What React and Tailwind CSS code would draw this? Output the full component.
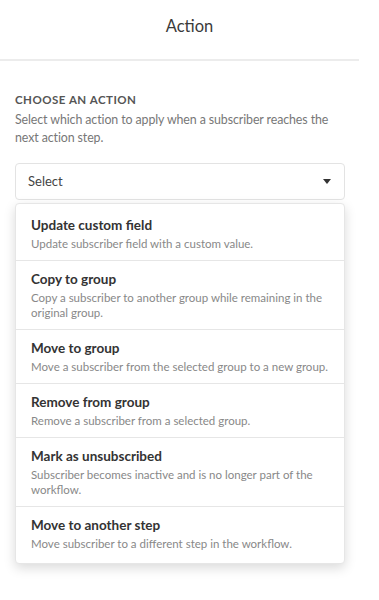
const ACTIONS = [
  {
    title: 'Update custom field',
    description: 'Update subscriber field with a custom value.',
  },
  {
    title: 'Copy to group',
    description: 'Copy a subscriber to another group while remaining in the original group.',
  },
  {
    title: 'Move to group',
    description: 'Move a subscriber from the selected group to a new group.',
  },
  {
    title: 'Remove from group',
    description: 'Remove a subscriber from a selected group.',
  },
  {
    title: 'Mark as unsubscribed',
    description: 'Subscriber becomes inactive and is no longer part of the workflow.',
  },
  {
    title: 'Move to another step',
    description: 'Move subscriber to a different step in the workflow.',
  },
];

const App = () => {
  return (
    <div className="w-[379px] h-[600px] bg-white font-['Lato',sans-serif] overflow-hidden">
      {/* Header */}
      <div className="h-[61px] flex items-center justify-center border-b-2 border-[#ececec] mr-[20px]">
        <h1 className="text-[16.5px] text-[#3a3a3a] -mt-[7px] ml-[20px]">Action</h1>
      </div>

      {/* Body */}
      <div className="w-[359px] px-[15px] pt-[31px]">
        <h2 className="text-[11.5px] font-bold uppercase tracking-[0.5px] text-[#555] leading-[16px]">
          Choose an action
        </h2>
        <p className="mt-[3px] whitespace-nowrap text-[12.4px] tracking-[-0.1px] leading-[18px] text-[#777]">
          Select which action to apply when a subscriber reaches the
          <br />
          next action step.
        </p>

        <div className="mt-[16px] w-[330px] h-[37px] border border-[#e3e3e3] rounded-[4px] flex items-center justify-between pl-[12px] pr-[13px]">
          <span className="text-[13px] text-[#444]">Select</span>
          <svg width="8" height="5" viewBox="0 0 8 5">
            <path d="M0 0 L8 0 L4 5 Z" fill="#333" />
          </svg>
        </div>

        {/* Dropdown menu */}
        <div className="mt-[3px] w-[330px] bg-white border border-[#e6e6e6] rounded-[4px] shadow-[0_4px_12px_rgba(0,0,0,0.15)] py-[3px]">
          {ACTIONS.map((action, idx) => (
            <div
              key={action.title}
              className={`px-[15px] pt-[10px] pb-[9px] ${idx > 0 ? 'border-t border-[#e6e6e6]' : ''}`}
            >
              <div className="text-[13.5px] font-bold leading-[16px] text-[#333]">
                {action.title}
              </div>
              <div className="mt-[3px] text-[11.5px] leading-[15px] text-[#888]">
                {action.description}
              </div>
            </div>
          ))}
        </div>
      </div>
    </div>
  );
};

export default App;
